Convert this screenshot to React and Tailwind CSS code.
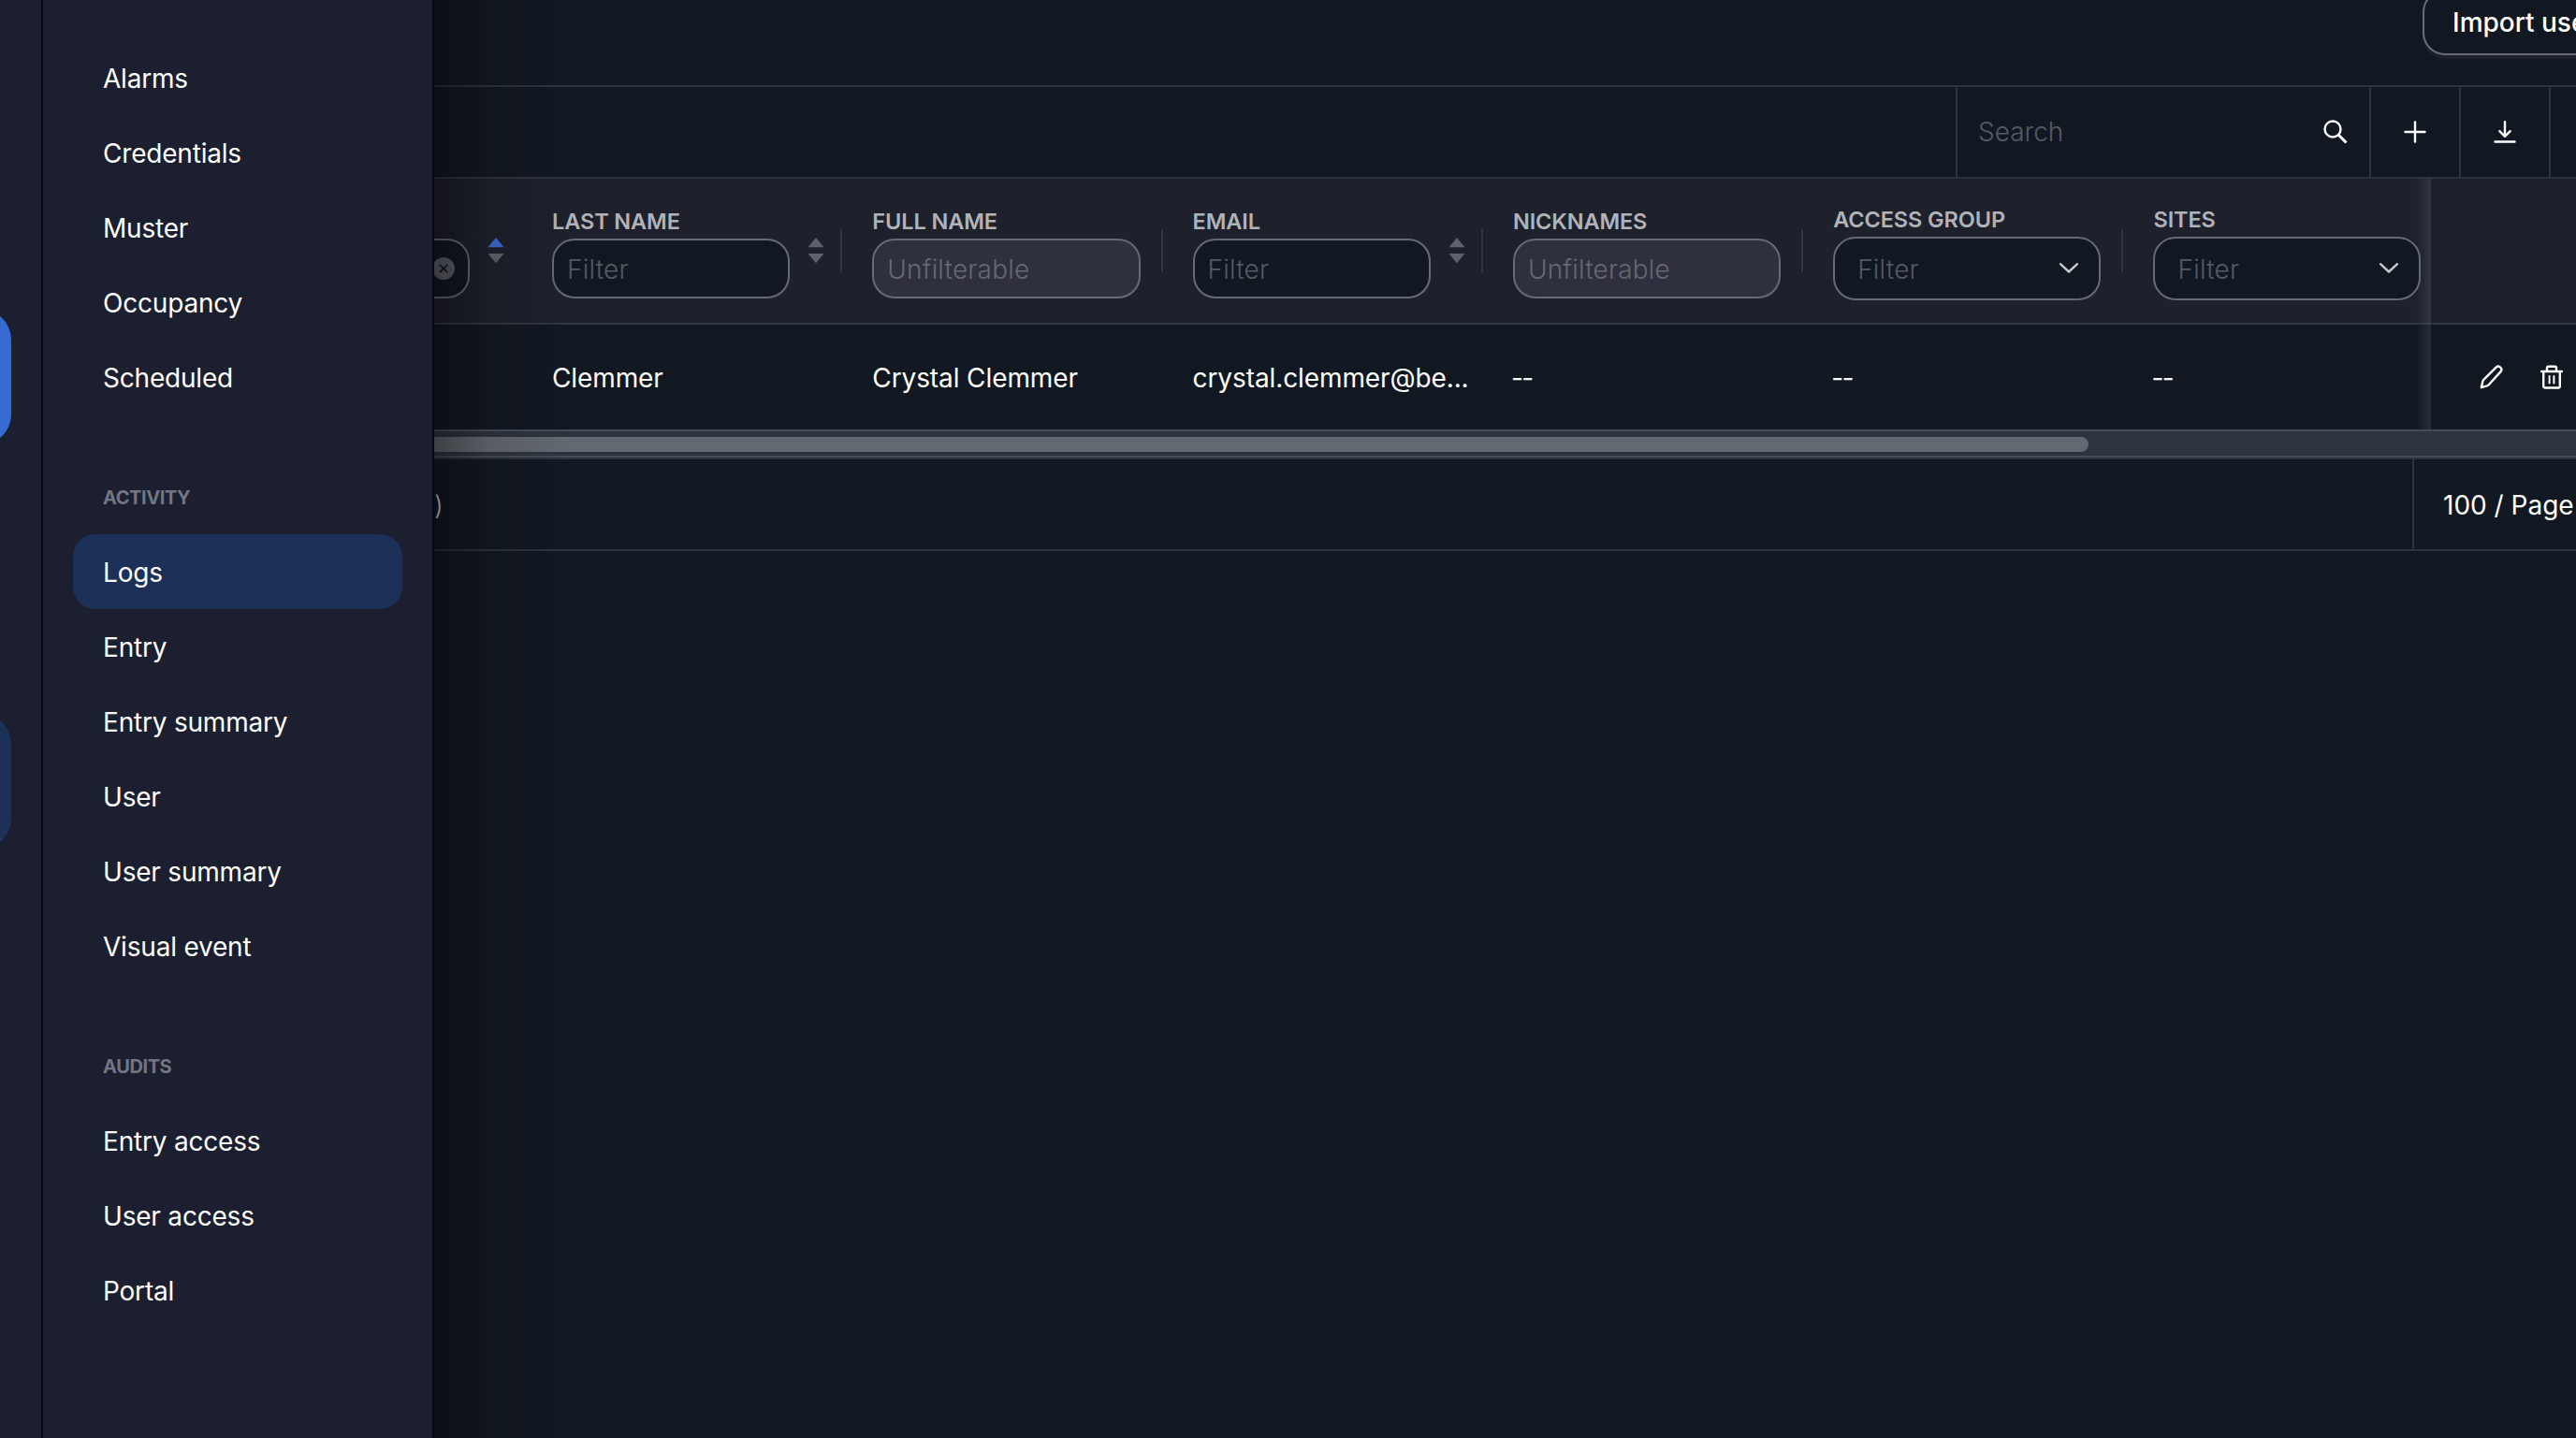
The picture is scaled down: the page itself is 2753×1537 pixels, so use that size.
import React from 'react';

const navGroups = [
  { title: '', items: ['Alarms', 'Credentials', 'Muster', 'Occupancy', 'Scheduled'] },
  { title: 'Activity', items: ['Logs', 'Entry', 'Entry summary', 'User', 'User summary', 'Visual event'] },
  { title: 'Audits', items: ['Entry access', 'User access', 'Portal'] },
];

const columns = [
  { label: 'Last name', type: 'text', sortable: true, value: 'Clemmer' },
  { label: 'Full name', type: 'disabled', value: 'Crystal Clemmer' },
  { label: 'Email', type: 'text', sortable: true, value: 'crystal.clemmer@be...' },
  { label: 'Nicknames', type: 'disabled', value: '--' },
  { label: 'Access group', type: 'select', value: '--' },
  { label: 'Sites', type: 'select', last: true, value: '--' },
];

function SearchIcon() {
  return (
    <svg width="26" height="26" viewBox="0 0 26 26" fill="none" stroke="#fff" strokeWidth="2.4">
      <circle cx="10" cy="10" r="8.5" />
      <path d="M16 16l8.5 8.5" strokeWidth="3" />
    </svg>
  );
}

function PlusIcon() {
  return (
    <svg width="24" height="24" viewBox="0 0 24 24" fill="none" stroke="#fff" strokeWidth="2.4" strokeLinecap="round">
      <path d="M12 1.5v21M1.5 12h21" />
    </svg>
  );
}

function DownloadIcon() {
  return (
    <svg width="24" height="24" viewBox="0 0 24 24" fill="none" stroke="#fff" strokeWidth="2.4" strokeLinecap="round" strokeLinejoin="round">
      <path d="M12 1.2v15.3M6.3 11.2l5.7 5.6 5.7-5.6M1.5 22.5h21" />
    </svg>
  );
}

function PencilIcon() {
  return (
    <svg width="26" height="26" viewBox="0 0 26 26" fill="none" stroke="#fff" strokeWidth="2.4" strokeLinecap="round" strokeLinejoin="round">
      <path d="M1.8 24.2l1.5-6.4c.2-.8.6-1.5 1.2-2.1L17.6 2.6a3.4 3.4 0 0 1 4.8 4.8L10 21c-.6.6-1.3 1.1-2.1 1.4z" />
    </svg>
  );
}

function TrashIcon() {
  return (
    <svg width="24" height="26" viewBox="0 0 24 26" fill="none" stroke="#fff" strokeWidth="2.4" strokeLinecap="round" strokeLinejoin="round">
      <path d="M1.2 7h21.6M3.2 7v15.7A1.8 1.8 0 0 0 5 24.5h14a1.8 1.8 0 0 0 1.8-1.8V7M7 7V3.2a1.5 1.5 0 0 1 1.5-1.5h7A1.5 1.5 0 0 1 17 3.2V7" />
      <path d="M9.6 12v7.5M14.4 12v7.5" strokeWidth="2" />
    </svg>
  );
}

function Sorter({ active }) {
  return (
    <svg width="18" height="28" viewBox="0 0 18 28" className="shrink-0">
      <path d="M9 0l8.5 10.3H.5z" fill={active ? '#3b6cd0' : '#5f626c'} />
      <path d="M9 27.3L.5 17h17z" fill="#5f626c" />
    </svg>
  );
}

function HeaderCell({ column }) {
  const isSelect = column.type === 'select';
  return (
    <div className="flex h-full w-[342.3px] shrink-0 justify-between pl-8">
      <div className={isSelect ? 'flex flex-col pt-[31px]' : 'flex flex-col pt-[33px]'}>
        <div className="h-[31px] text-[23.5px] leading-[25px] font-semibold tracking-[-0.1px] whitespace-nowrap text-[#b1b3b9] uppercase">
          {column.label}
        </div>
        {column.type === 'text' && (
          <div className="flex h-16 w-[254px] items-center rounded-3xl border-2 border-[#666a74] bg-[#121822] pt-0.5 pl-[14px] text-[28px] font-light tracking-[0.2px] text-[#555a64]">
            Filter
          </div>
        )}
        {column.type === 'disabled' && (
          <div className="flex h-16 w-[286.5px] items-center rounded-3xl border-2 border-[#666a74] bg-[#2f303d] pt-0.5 pl-[14px] text-[28px] font-light tracking-[0.2px] text-[#666873]">
            Unfilterable
          </div>
        )}
        {isSelect && (
          <div className="flex h-[68px] w-[286px] items-center justify-between rounded-3xl border-2 border-[#666a74] bg-[#121822] pr-[21px] pl-6 text-[28px] font-light tracking-[0.2px] text-[#555a64]">
            <span className="pt-0.5">Filter</span>
            <svg width="22" height="14" viewBox="0 0 22 14" fill="none" stroke="#c6c8cc" strokeWidth="2.4" strokeLinecap="round" strokeLinejoin="round">
              <path d="M2 2.2l9 8.3 9-8.3" />
            </svg>
          </div>
        )}
      </div>
      <div className="flex">
        {column.sortable && (
          <div className="mr-[17px] pt-[63px]">
            <Sorter />
          </div>
        )}
        {!column.last && <div className="mt-[54px] h-[46px] w-0.5 bg-[#31353f]" />}
      </div>
    </div>
  );
}

function Rail() {
  return (
    <div className="h-full w-[46px] shrink-0 border-r-2 border-[#070a13] pt-[331px]">
      <div className="-ml-8 h-36 w-11 rounded-r-[32px] bg-[#376bd3]" />
      <div className="mt-72 -ml-8 h-36 w-11 rounded-r-[32px] bg-[#1d3158]" />
    </div>
  );
}

function Sidebar() {
  return (
    <nav className="relative z-10 flex h-full w-[464px] shrink-0 border-r-2 border-[#090c15] bg-[#1b1f30]">
      <Rail />
      <div className="flex-1 px-8 pt-[43px]">
        {navGroups.map((group) => (
          <div key={group.title}>
            {group.title && (
              <div className="h-32 pt-[77px] pl-8 text-[20px] leading-6 font-bold tracking-[-0.4px] text-[#727583] uppercase">
                {group.title}
              </div>
            )}
            {group.items.map((item) => (
              <div
                key={item}
                className={`flex h-20 items-center rounded-3xl pt-0.5 pl-8 text-[28px] tracking-[-0.2px] text-white ${item === 'Logs' ? 'bg-[#1d3158]' : ''}`}
              >
                {item}
              </div>
            ))}
          </div>
        ))}
      </div>
      {/* drawer shadow over the page */}
      <div className="absolute top-0 left-full h-full w-[150px] bg-linear-to-r from-black/40 via-black/12 via-40% to-transparent" />
    </nav>
  );
}

function Toolbar() {
  return (
    <div className="flex h-[100px] shrink-0 justify-end border-y-2 border-[#2d323c]">
      <div className="flex w-[442px] items-center justify-between border-l-2 border-[#2d323c] pr-[23px] pl-[22px] text-[28px] font-light text-[#555a64]">
        Search
        <SearchIcon />
      </div>
      <div className="flex w-24 items-center justify-center border-l-2 border-[#2d323c]">
        <PlusIcon />
      </div>
      <div className="flex w-24 items-center justify-center border-l-2 border-[#2d323c]">
        <DownloadIcon />
      </div>
      <div className="w-[29px] border-l-2 border-[#2d323c]" />
    </div>
  );
}

function UsersTable() {
  return (
    <div className="relative shrink-0">
      <div className="flex h-[156px] border-b-2 border-[#31353f] bg-[#1e212c]">
        <div className="flex w-[94px] shrink-0">
          <div className="mt-16 flex h-16 w-[38px] items-center justify-end rounded-r-3xl border-y-2 border-r-2 border-[#666a74] bg-[#121822] pr-[14px]">
            <svg width="24" height="24" viewBox="0 0 24 24" className="shrink-0">
              <circle cx="12" cy="12" r="12" fill="#5f626c" />
              <path d="M7.8 7.8l8.4 8.4M16.2 7.8l-8.4 8.4" stroke="#121822" strokeWidth="1.8" />
            </svg>
          </div>
          <div className="pt-[63px] pl-[19px]">
            <Sorter active />
          </div>
        </div>
        {columns.map((column) => (
          <HeaderCell key={column.label} column={column} />
        ))}
      </div>
      <div className="flex h-28 pl-[94px]">
        {columns.map((column) => (
          <div
            key={column.label}
            className={`flex h-full w-[342.3px] shrink-0 items-center pt-0.5 text-[28px] whitespace-nowrap text-white ${column.value === '--' ? 'pl-[30px] tracking-[-1.5px]' : 'pl-8 tracking-[-0.1px]'}`}
          >
            {column.value}
          </div>
        ))}
      </div>

      {/* pinned actions column */}
      <div className="absolute top-0 right-0 flex h-full">
        <div className="h-full w-4 bg-linear-to-r from-[#5d626c]/0 to-[#5d626c]/30" />
        <div className="flex h-full w-[155px] flex-col">
          <div className="h-[156px] border-b-2 border-[#31353f] bg-[#1e212c]" />
          <div className="flex h-28 items-center gap-[39px] bg-[#121822] pl-[52px]">
            <PencilIcon />
            <TrashIcon />
          </div>
        </div>
      </div>
    </div>
  );
}

function Footer() {
  return (
    <div className="flex h-[98px] shrink-0 justify-between border-b-2 border-[#2d323c] text-[28px] text-white">
      <div className="flex items-center pt-0.5 font-light text-[#d5d6d8]">)</div>
      <div className="flex w-[175px] items-center border-l-2 border-[#2d323c] pt-0.5 pl-[31px] whitespace-nowrap">
        100 / Page
      </div>
    </div>
  );
}

function App() {
  return (
    <div className="flex h-screen w-screen overflow-hidden bg-[#121822] font-['Inter',sans-serif]">
      <Sidebar />
      <main className="flex min-w-0 flex-1 flex-col overflow-hidden">
        <div className="flex h-[91px] shrink-0 justify-end">
          <button className="-mt-[11px] -mr-[60px] flex h-[70px] w-[224px] items-center rounded-3xl border-2 border-[#686c76] pl-[30px] text-[28px] font-medium whitespace-nowrap text-white shadow-[0_4px_0_#1b202b]">
            Import users
          </button>
        </div>
        <Toolbar />
        <UsersTable />
        <div className="h-8 shrink-0 border-b-2 border-[#2d323c]">
          <div className="h-[30px] border-y-2 border-[#464c57] bg-[#2e343f]">
            <div className="mt-1.5 h-4 w-[1768px] rounded-r-lg bg-[#636970]" />
          </div>
        </div>
        <Footer />
      </main>
    </div>
  );
}

export default App;
